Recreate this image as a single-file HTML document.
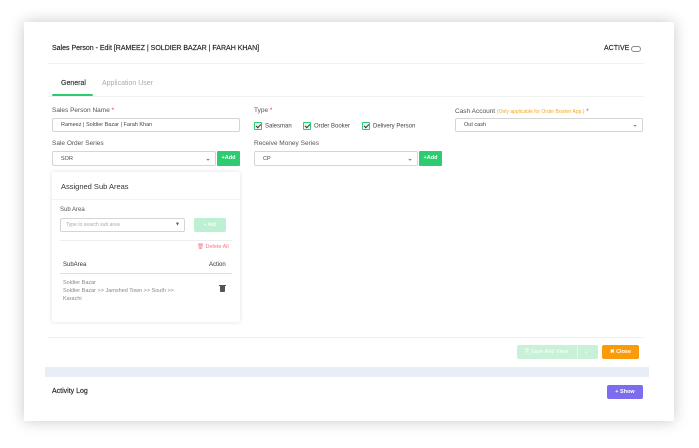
<!DOCTYPE html>
<html><head><meta charset="utf-8"><style>
*{box-sizing:border-box;margin:0;padding:0}
body{width:699px;height:448px;background:#fff;font-family:"Liberation Sans",sans-serif;position:relative;overflow:hidden;color:#333}
.card{position:absolute;left:24px;top:22px;width:650px;height:399px;background:#fff;box-shadow:0 0 14px rgba(0,0,0,.22)}
.a{position:absolute}
.lbl{font-size:6.5px;color:#555}
.req{color:#e53935}
.inp{position:absolute;height:14px;border:1px solid #d5d5d5;border-radius:2px;font-size:5.5px;color:#444;padding:0 8px;background:#fff;display:flex;align-items:center}
.chev{position:absolute;right:4px;top:50%;transform:translateY(-55%);font-size:7px;color:#444}
.add{position:absolute;width:23px;height:15px;background:#2ecc71;color:#fff;font-size:5.5px;font-weight:bold;text-align:center;line-height:15px;border-radius:1px}
.cb{display:inline-block;width:8px;height:8px;border:1px solid #2ecc71;border-radius:1px;vertical-align:middle;margin-right:3px;position:relative;background:#e8f8ee}
.cb:after{content:"";position:absolute;left:2px;top:0px;width:2px;height:4px;border:solid #333;border-width:0 1px 1px 0;transform:rotate(45deg)}
.ck{font-size:6px;color:#444;position:absolute}
</style></head><body>
<div class="card"></div>
<div class="a" style="left:52px;top:45px;font-size:7px;color:#222;-webkit-text-stroke:.15px #222">Sales Person - Edit [RAMEEZ | SOLDIER BAZAR | FARAH KHAN]</div>
<div class="a" style="left:604px;top:45px;font-size:7px;color:#222;-webkit-text-stroke:.15px #222">ACTIVE</div>
<div class="a" style="left:631px;top:46px;width:10px;height:6px;border:1px solid #888;border-radius:4px"></div>
<div class="a" style="left:48px;top:63px;width:596px;height:1px;background:#f1f1f1"></div>
<div class="a" style="left:61px;top:80px;font-size:7px;color:#333;-webkit-text-stroke:.15px #333">General</div>
<div class="a" style="left:102px;top:80px;font-size:7px;color:#aaa">Application User</div>
<div class="a" style="left:52px;top:94px;width:41px;height:2px;background:#2ecc71;border-radius:1px"></div>
<div class="a" style="left:48px;top:96px;width:596px;height:1px;background:#f1f1f1"></div>

<div class="a lbl" style="left:52px;top:107px">Sales Person Name <span class="req">*</span></div>
<div class="inp" style="left:52px;top:118px;width:188px">Rameez | Soldier Bazar | Farah Khan</div>
<div class="a lbl" style="left:254px;top:107px">Type <span class="req">*</span></div>
<div class="ck" style="left:254px;top:122px"><span class="cb"></span>Salesman</div>
<div class="ck" style="left:303px;top:122px"><span class="cb"></span>Order Booker</div>
<div class="ck" style="left:362px;top:122px"><span class="cb"></span>Delivery Person</div>
<div class="a lbl" style="left:455px;top:108px">Cash Account <span style="color:#f5a623;font-size:5px">(Only applicable for Order Booker App.)</span> <span class="req">*</span></div>
<div class="inp" style="left:455px;top:118px;width:188px">Out cash<span class="chev">⌄</span></div>

<div class="a lbl" style="left:52px;top:140px">Sale Order Series</div>
<div class="inp" style="left:52px;top:151px;width:164px;height:15px">SOR<span class="chev">⌄</span></div>
<div class="add" style="left:217px;top:151px">+Add</div>
<div class="a lbl" style="left:254px;top:140px">Receive Money Series</div>
<div class="inp" style="left:254px;top:151px;width:164px;height:15px">CP<span class="chev">⌄</span></div>
<div class="add" style="left:419px;top:151px">+Add</div>

<div class="a" style="left:52px;top:172px;width:188px;height:150px;background:#fff;box-shadow:0 0 5px rgba(0,0,0,.12);border-radius:2px"></div>
<div class="a" style="left:61px;top:182px;font-size:7.5px;color:#333">Assigned Sub Areas</div>
<div class="a" style="left:52px;top:199px;width:188px;height:1px;background:#f2f2f2"></div>
<div class="a lbl" style="left:60px;top:207px;font-size:6px">Sub Area</div>
<div class="inp" style="left:60px;top:218px;width:125px;height:14px;font-size:5px;color:#aaa;padding:0 5px">Type to search sub area<span class="chev" style="color:#555;font-size:5px">▼</span></div>
<div class="a" style="left:194px;top:218px;width:32px;height:14px;background:#bdf0d2;border-radius:2px;color:#fff;font-size:5px;text-align:center;line-height:14px">+ Add</div>
<div class="a" style="left:60px;top:240px;width:172px;height:1px;background:#eee"></div>
<div class="a" style="left:197px;top:244px;font-size:5.5px;color:#f27a8a">🗑 Delete All</div>
<div class="a" style="left:63px;top:262px;font-size:6px;color:#333">SubArea</div>
<div class="a" style="left:209px;top:262px;font-size:6px;color:#333">Action</div>
<div class="a" style="left:60px;top:273px;width:172px;height:1px;background:#e0e0e0"></div>
<div class="a" style="left:63px;top:279px;font-size:5.5px;color:#888;line-height:8px">Soldier Bazar<br>Soldier Bazar >> Jamshed Town >> South >><br>Karachi</div>
<div class="a" style="left:220px;top:286px;width:5px;height:6px;background:#555;border-radius:0 0 1px 1px"></div>
<div class="a" style="left:219px;top:285px;width:7px;height:1px;background:#555"></div>

<div class="a" style="left:48px;top:337px;width:596px;height:1px;background:#f1f1f1"></div>
<div class="a" style="left:517px;top:345px;width:81px;height:14px;background:#c8f1d8;border-radius:2px;color:#fff;font-size:5.5px;line-height:14px;padding-left:8px">⎘ Save And View<span style="position:absolute;left:67px;top:0">⌄</span></div>
<div class="a" style="left:577px;top:345px;width:1px;height:14px;background:#e6f8ee"></div>
<div class="a" style="left:602px;top:345px;width:37px;height:14px;background:#fb9b0a;border-radius:2px;color:#fff;font-size:5.5px;font-weight:bold;text-align:center;line-height:14px">✖ Close</div>
<div class="a" style="left:45px;top:367px;width:604px;height:10px;background:#e9edf5"></div>
<div class="a" style="left:52px;top:388px;font-size:7px;color:#222;-webkit-text-stroke:.15px #222">Activity Log</div>
<div class="a" style="left:607px;top:385px;width:36px;height:14px;background:#7b6cf0;border-radius:2px;color:#fff;font-size:5.5px;font-weight:bold;text-align:center;line-height:14px">+ Show</div>
</body></html>
